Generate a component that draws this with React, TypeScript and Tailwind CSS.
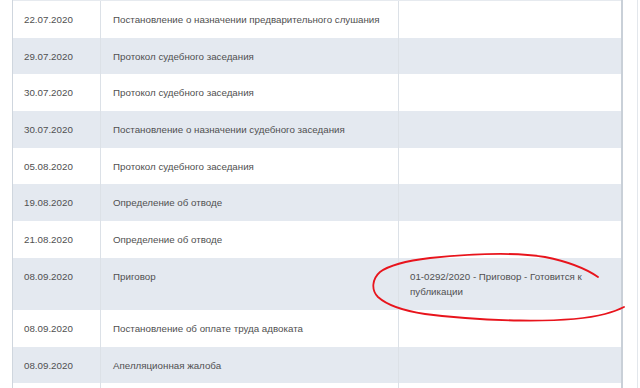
import React from "react";

type Row = { date: string; name: string; note?: string[]; tall?: boolean };

const rows: Row[] = [
  { date: "22.07.2020", name: "Постановление о назначении предварительного слушания" },
  { date: "29.07.2020", name: "Протокол судебного заседания" },
  { date: "30.07.2020", name: "Протокол судебного заседания" },
  { date: "30.07.2020", name: "Постановление о назначении судебного заседания" },
  { date: "05.08.2020", name: "Протокол судебного заседания" },
  { date: "19.08.2020", name: "Определение об отводе" },
  { date: "21.08.2020", name: "Определение об отводе" },
  {
    date: "08.09.2020",
    name: "Приговор",
    note: ["01-0292/2020 - Приговор - Готовится к", "публикации"],
    tall: true,
  },
  { date: "08.09.2020", name: "Постановление об оплате труда адвоката" },
  { date: "08.09.2020", name: "Апелляционная жалоба" },
  { date: "", name: "" },
];

export default function App() {
  return (
    <div
      className="relative w-[640px] h-[388px] overflow-hidden bg-white flex"
      style={{ fontFamily: '"Liberation Sans", Arial, sans-serif' }}
    >
      <div className="w-[12px] shrink-0" />
      <div className="w-[611px] shrink-0 flex flex-col border-l border-l-[#cfd6de] border-r-2 border-r-[#c9d0d8]">
        <div className="h-[1px] bg-[#e6eaef] shrink-0" />
        {rows.map((r, i) => (
          <div
            key={i}
            className={`flex shrink-0 text-[9.75px] leading-[15px] text-[#505050] ${
              i % 2 === 1 ? "bg-[#e4e9f0]" : "bg-white"
            } ${r.tall ? "h-[52.5px]" : "h-[36.67px]"}`}
          >
            <div className="w-[88px] shrink-0 border-r border-r-[#dce1e7] pl-[11px] pt-[11px]">
              {r.date}
            </div>
            <div className="w-[298px] shrink-0 border-r border-r-[#dce1e7] pl-[12px] pt-[11px]">
              {r.name}
            </div>
            <div className="flex-1 pl-[11px] pt-[11px]">
              {r.note?.map((l, j) => (
                <div key={j}>{l}</div>
              ))}
            </div>
          </div>
        ))}
      </div>
      <div className="w-[14px] shrink-0" />
      <div className="w-[1px] shrink-0 bg-[#e3e7ec]" />
      <svg
        className="absolute left-0 top-0 pointer-events-none"
        width="640"
        height="388"
        viewBox="0 0 640 388"
      >
        <path
          d="M598 277 C585 268 570 262 545 257 C515 252 470 254 430 258 C405 261 388 266 380 272 C372 279 371 290 378 297 C388 306 405 311 425 314 C455 318 490 320 520 320.5 C560 321 590 318 605 314 C614 311.5 620 309 624 307"
          fill="none"
          stroke="#e8141c"
          strokeWidth="1.8"
          strokeLinecap="round"
        />
      </svg>
    </div>
  );
}
